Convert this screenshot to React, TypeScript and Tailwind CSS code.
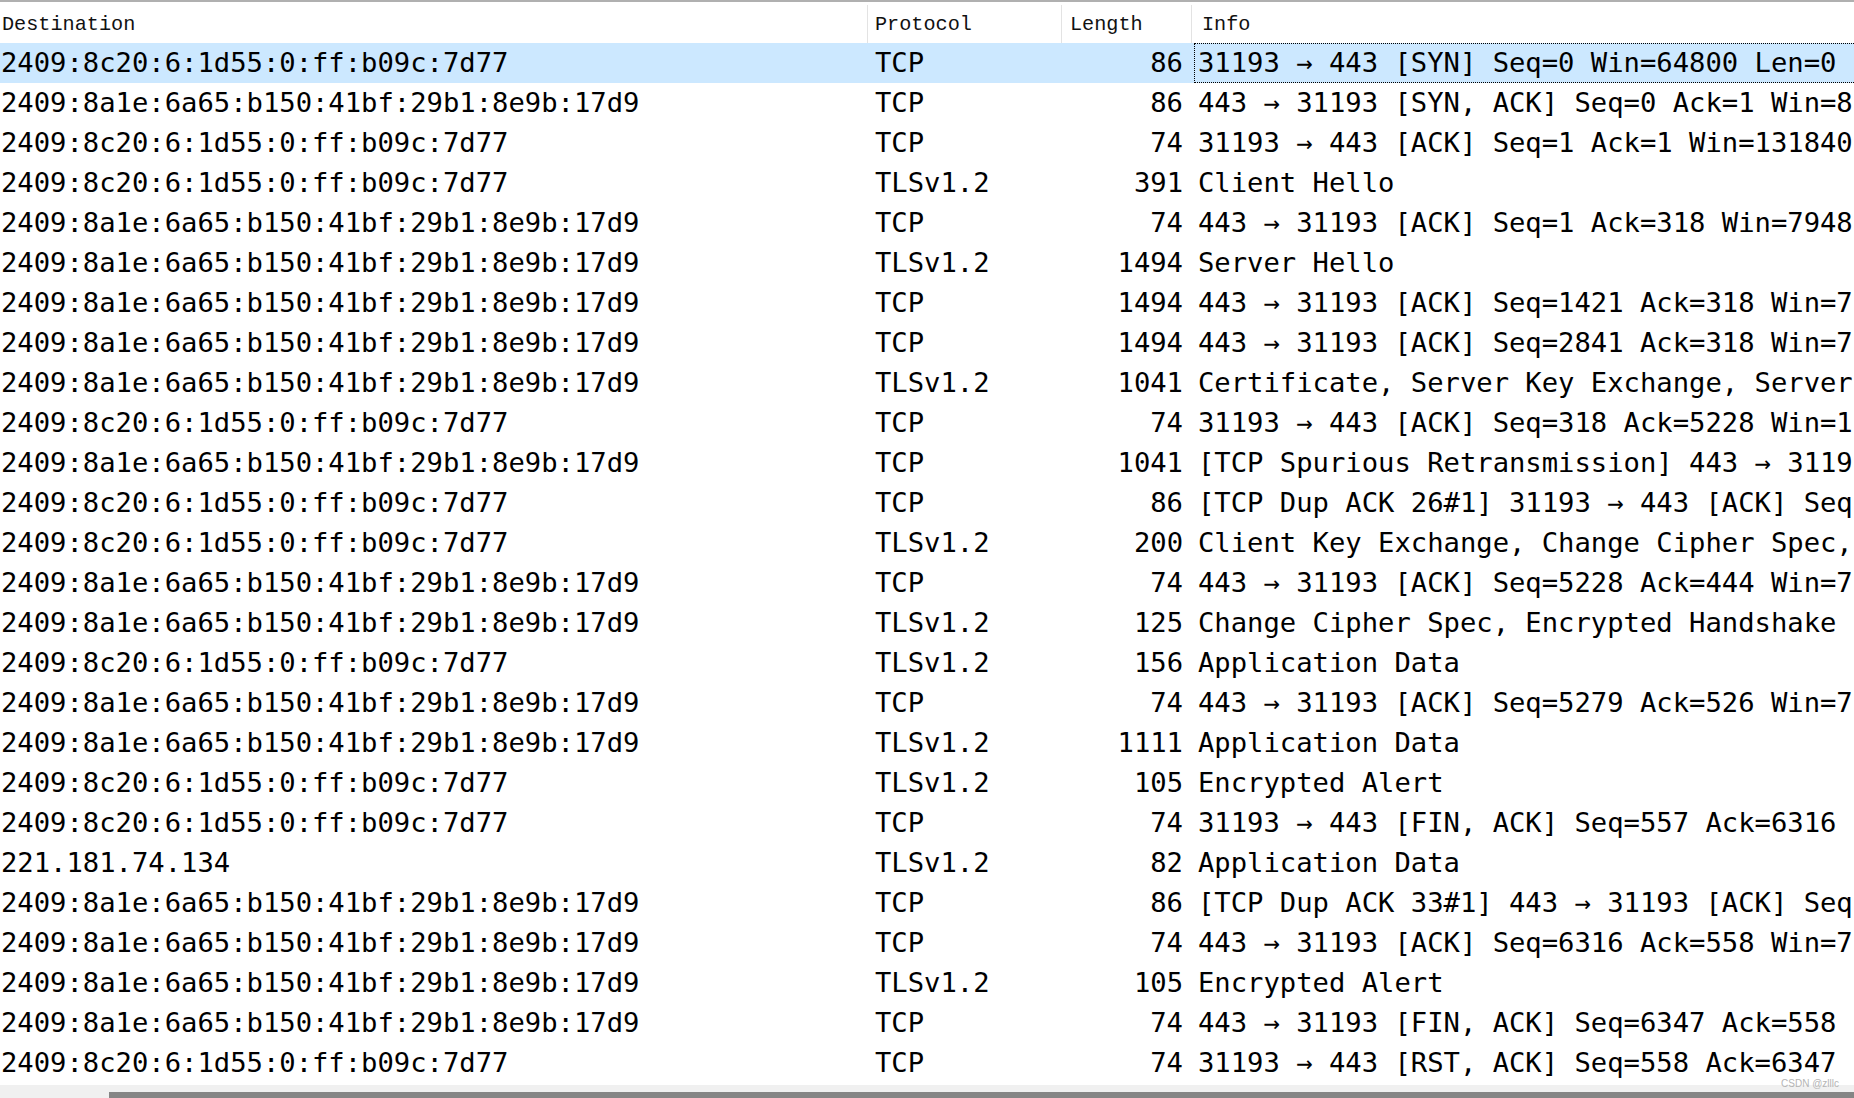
import React from "react";

type Row = { dst: string; proto: string; len: string; info: string };

const A = "2409:8c20:6:1d55:0:ff:b09c:7d77";
const B = "2409:8a1e:6a65:b150:41bf:29b1:8e9b:17d9";

const rows: Row[] = [
  { dst: A, proto: "TCP", len: "86", info: "31193 → 443 [SYN] Seq=0 Win=64800 Len=0" },
  { dst: B, proto: "TCP", len: "86", info: "443 → 31193 [SYN, ACK] Seq=0 Ack=1 Win=8" },
  { dst: A, proto: "TCP", len: "74", info: "31193 → 443 [ACK] Seq=1 Ack=1 Win=131840" },
  { dst: A, proto: "TLSv1.2", len: "391", info: "Client Hello" },
  { dst: B, proto: "TCP", len: "74", info: "443 → 31193 [ACK] Seq=1 Ack=318 Win=7948" },
  { dst: B, proto: "TLSv1.2", len: "1494", info: "Server Hello" },
  { dst: B, proto: "TCP", len: "1494", info: "443 → 31193 [ACK] Seq=1421 Ack=318 Win=7" },
  { dst: B, proto: "TCP", len: "1494", info: "443 → 31193 [ACK] Seq=2841 Ack=318 Win=7" },
  { dst: B, proto: "TLSv1.2", len: "1041", info: "Certificate, Server Key Exchange, Server" },
  { dst: A, proto: "TCP", len: "74", info: "31193 → 443 [ACK] Seq=318 Ack=5228 Win=1" },
  { dst: B, proto: "TCP", len: "1041", info: "[TCP Spurious Retransmission] 443 → 3119" },
  { dst: A, proto: "TCP", len: "86", info: "[TCP Dup ACK 26#1] 31193 → 443 [ACK] Seq" },
  { dst: A, proto: "TLSv1.2", len: "200", info: "Client Key Exchange, Change Cipher Spec," },
  { dst: B, proto: "TCP", len: "74", info: "443 → 31193 [ACK] Seq=5228 Ack=444 Win=7" },
  { dst: B, proto: "TLSv1.2", len: "125", info: "Change Cipher Spec, Encrypted Handshake" },
  { dst: A, proto: "TLSv1.2", len: "156", info: "Application Data" },
  { dst: B, proto: "TCP", len: "74", info: "443 → 31193 [ACK] Seq=5279 Ack=526 Win=7" },
  { dst: B, proto: "TLSv1.2", len: "1111", info: "Application Data" },
  { dst: A, proto: "TLSv1.2", len: "105", info: "Encrypted Alert" },
  { dst: A, proto: "TCP", len: "74", info: "31193 → 443 [FIN, ACK] Seq=557 Ack=6316" },
  { dst: "221.181.74.134", proto: "TLSv1.2", len: "82", info: "Application Data" },
  { dst: B, proto: "TCP", len: "86", info: "[TCP Dup ACK 33#1] 443 → 31193 [ACK] Seq" },
  { dst: B, proto: "TCP", len: "74", info: "443 → 31193 [ACK] Seq=6316 Ack=558 Win=7" },
  { dst: B, proto: "TLSv1.2", len: "105", info: "Encrypted Alert" },
  { dst: B, proto: "TCP", len: "74", info: "443 → 31193 [FIN, ACK] Seq=6347 Ack=558" },
  { dst: A, proto: "TCP", len: "74", info: "31193 → 443 [RST, ACK] Seq=558 Ack=6347" },
];

const cols = "grid grid-cols-[867px_194px_130px_1fr]";

export default function App() {
  return (
    <div className="relative flex h-[1098px] w-[1854px] flex-col overflow-hidden bg-white text-black">
      {/* header */}
      <div className={`${cols} h-[43px] shrink-0 border-t-2 border-[#b0b0b0] font-['Liberation_Mono',monospace] text-[20.2px] text-[#111]`}>
        <div className="flex items-center pl-[2px] pt-[6px]">Destination</div>
        <div className="mt-[3px] flex items-center border-l border-[#e3e3e3] pl-[7px] pt-[3px]">Protocol</div>
        <div className="mt-[3px] flex items-center border-l border-[#e3e3e3] pl-[8px] pt-[3px]">Length</div>
        <div className="mt-[3px] flex items-center border-l border-[#e3e3e3] pl-[10px] pt-[3px]">Info</div>
      </div>

      {/* rows */}
      <div className="shrink-0 font-['DejaVu_Sans_Mono',monospace] text-[27.2px] leading-none">
        {rows.map((r, i) => (
          <div key={i} className={`${cols} h-[40px] ${i === 0 ? "bg-[#cce8ff]" : ""}`}>
            <div className="flex items-center overflow-hidden whitespace-nowrap pl-[1px]">{r.dst}</div>
            <div className="flex items-center overflow-hidden whitespace-nowrap pl-[8px]">{r.proto}</div>
            <div className="flex items-center justify-end overflow-hidden whitespace-nowrap pr-[8px]">{r.len}</div>
            <div className="flex min-w-0 overflow-hidden pl-[3px]">
              <div
                className={`flex flex-1 items-center whitespace-nowrap pl-[3px] ${
                  i === 0 ? "border border-r-0 border-dotted border-black" : "border border-transparent"
                }`}
              >
                {r.info}
              </div>
            </div>
          </div>
        ))}
      </div>

      {/* horizontal scrollbar */}
      <div className="mt-[2px] flex flex-1 bg-[#f0f0f0] pl-[109px] pt-[7px]">
        <div className="h-full flex-1 bg-[#858585]" />
      </div>

      {/* watermark */}
      <div className="absolute bottom-[9px] right-[15px] font-['Liberation_Sans',sans-serif] text-[10px] leading-none text-[#b4b4b4]">
        CSDN @zlllc
      </div>
    </div>
  );
}
